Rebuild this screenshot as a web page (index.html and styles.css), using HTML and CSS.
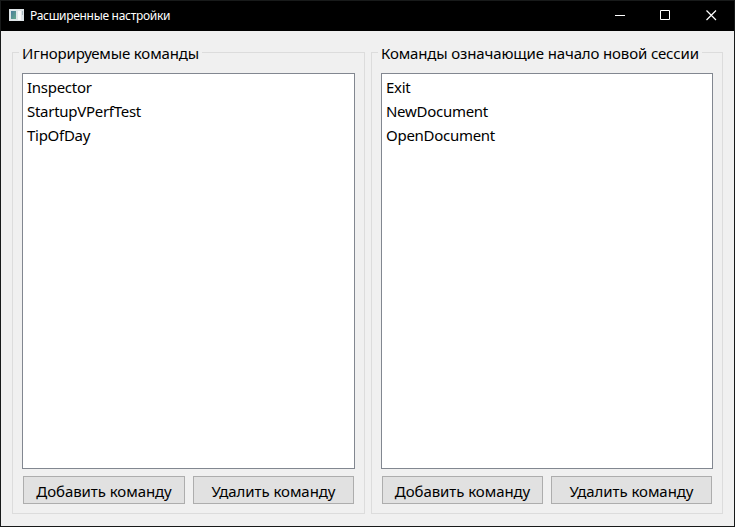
FILE: index.html
```html
<!DOCTYPE html>
<html lang="ru">
<head>
<meta charset="utf-8">
<title>Расширенные настройки</title>
<link rel="stylesheet" href="styles.css">
</head>
<body>
<div class="window">
  <header class="titlebar">
    <svg class="app-icon" width="15" height="12" viewBox="0 0 15 12">
      <defs><linearGradient id="g" x1="0" y1="0" x2="1" y2="1"><stop offset="0" stop-color="#4a7c9c"/><stop offset="1" stop-color="#68aa8c"/></linearGradient></defs>
      <rect width="15" height="12" fill="#dfe5e8"/>
      <rect x="2" y="2" width="5" height="8" fill="url(#g)"/>
      <rect x="9" y="2" width="3" height="9" fill="#f8f8f8"/>
      <rect x="13" y="2" width="1" height="4" fill="#a9b9c0"/>
    </svg>
    <h1 class="title">Расширенные настройки</h1>
    <div class="controls">
      <svg width="46" height="30" viewBox="0 0 46 30"><path d="M19 14.5h10"/></svg>
      <svg width="46" height="30" viewBox="0 0 46 30"><path d="M18.500 9.500h9v9h-9z"/></svg>
      <svg width="46" height="30" viewBox="0 0 46 30"><path class="close" d="M18.500 9.500l9.500 9.500M28 9.500l-9.500 9.500"/></svg>
    </div>
  </header>
  <main class="content">
    <section class="group">
      <h2 class="legend"><span>Игнорируемые команды</span></h2>
      <ul class="list">
        <li>Inspector</li>
        <li>StartupVPerfTest</li>
        <li>TipOfDay</li>
      </ul>
      <div class="actions">
        <button>Добавить команду</button>
        <button>Удалить команду</button>
      </div>
    </section>
    <section class="group">
      <h2 class="legend"><span>Команды означающие начало новой сессии</span></h2>
      <ul class="list">
        <li>Exit</li>
        <li>NewDocument</li>
        <li>OpenDocument</li>
      </ul>
      <div class="actions">
        <button>Добавить команду</button>
        <button>Удалить команду</button>
      </div>
    </section>
  </main>
</div>
</body>
</html>
```
FILE: styles.css
```css
* { box-sizing: border-box; }
body {
  margin: 0;
  font: 15px/24px "Noto Sans", "Open Sans", sans-serif;
  color: #000;
}
.window {
  display: flex;
  flex-direction: column;
  width: 735px;
  height: 527px;
  border: 1px solid #181a1a;
  background: #f0f0f0;
}
.titlebar {
  display: flex;
  align-items: center;
  height: 30px;
  padding-left: 8px;
  background: #000;
  color: #fff;
}
.app-icon { margin-top: -2px; }
.title {
  margin: 0 0 0 6px;
  font-size: 12px;
  font-weight: 400;
  line-height: 30px;
  letter-spacing: -0.3px;
}
.controls { display: flex; margin-left: auto; }
.controls path { fill: none; stroke: #fff; stroke-width: 1; }
.controls .close { stroke-width: 1.2; }
.content {
  display: grid;
  grid-template-columns: 353px 352px;
  column-gap: 6px;
  flex: 1;
  padding: 21px 0 12px 11px;
}
.group {
  display: flex;
  flex-direction: column;
  border: 1px solid #dcdcdc;
  padding: 0 9px 9px;
}
.legend {
  height: 20px;
  margin: 0;
  font-size: inherit;
  font-weight: 400;
}
.legend span {
  display: block;
  width: max-content;
  height: 20px;
  margin: -10px 0 0 -3px;
  padding: 0 3px;
  line-height: 20px;
  letter-spacing: -0.14px;
  background: #f0f0f0;
  white-space: nowrap;
}
.list {
  height: 396px;
  margin: 0;
  padding: 1px 4px;
  border: 1px solid #828790;
  background: #fff;
  list-style: none;
  letter-spacing: -0.28px;
}
.actions {
  display: grid;
  grid-template-columns: 162px 161px;
  column-gap: 8px;
  margin: 7px 1px 0;
}
.group + .group .actions { grid-template-columns: 161px 161px; }
button {
  height: 28px;
  padding: 2px 0 0;
  border: 1px solid #adadad;
  background: #e1e1e1;
  font: inherit;
  line-height: 24px;
  letter-spacing: -0.06px;
  color: #000;
}
```
